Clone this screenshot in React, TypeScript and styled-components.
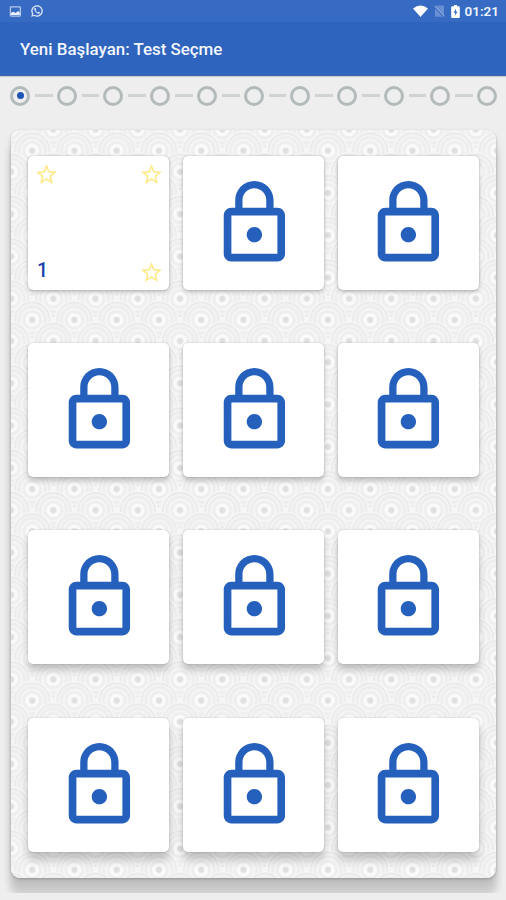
import React from "react";
import styled, { createGlobalStyle } from "styled-components";

const BLUE = "#2e63be";

const GlobalStyle = createGlobalStyle`
  * { box-sizing: border-box; }
  body { margin: 0; background: #eeeeee; font-family: Roboto, sans-serif; }
`;

const Screen = styled.div`
  width: 506px;
  height: 900px;
  display: flex;
  flex-direction: column;
  overflow: hidden;
  background: #eeeeee;
`;

const StatusBar = styled.div`
  flex: none;
  height: 22px;
  padding: 0 7px 0 9px;
  display: flex;
  align-items: center;
  background: #366ac3;
  color: #fff;
`;

const StatusGroup = styled.div<{ $end?: boolean }>`
  display: flex;
  align-items: center;
  gap: ${(p) => (p.$end ? "6px" : "8px")};
  margin-left: ${(p) => (p.$end ? "auto" : "0")};
  svg { display: block; }
`;

const Clock = styled.span`
  margin-left: -2px;
  font-size: 13.5px;
  line-height: 20px;
  font-weight: 600;
  color: #edf3fc;
`;

const AppBar = styled.header`
  flex: none;
  height: 54px;
  padding: 1px 20px 0;
  display: flex;
  align-items: center;
  background: ${BLUE};
  border-bottom: 1px solid #3a64b0;
  box-shadow: 0 1px 1px rgba(0, 0, 0, 0.14);
`;

const Title = styled.h1`
  margin: 0;
  color: #f4f7fd;
  font-size: 16.9px;
  line-height: 24px;
  font-weight: 500;
  white-space: nowrap;
`;

const Steps = styled.nav`
  flex: none;
  height: 39px;
  padding: 0 9px 0 10px;
  display: flex;
  align-items: center;
`;

const Step = styled.span`
  flex: none;
  width: 20px;
  height: 20px;
  display: grid;
  place-items: center;
  border: 3px solid #b2babb;
  border-radius: 50%;
`;

const StepDot = styled.span`
  width: 7px;
  height: 7px;
  border-radius: 50%;
  background: #1f55b8;
`;

const Connector = styled.span`
  flex: 1;
  height: 3px;
  margin: 0 4px 0 5px;
  background: #d0d3d3;
`;

const Stage = styled.main`
  flex: none;
  height: 778px;
  padding: 15px 10px 15px 11px;
  overflow: hidden;
`;

const Panel = styled.section`
  position: relative;
  height: 748px;
  border-radius: 9px;
  background: #f3f3f3;
  box-shadow: 0 18px 7px 1px rgba(0, 0, 0, 0.12), 0 8px 9px 1px rgba(0, 0, 0, 0.09),
    0 1px 3px rgba(0, 0, 0, 0.24);
`;

const Backdrop = styled.svg`
  position: absolute;
  inset: 0;
  width: 100%;
  height: 100%;
  border-radius: 9px;
`;

const Grid = styled.div`
  position: relative;
  display: grid;
  grid-template-columns: repeat(3, 141px);
  grid-auto-rows: 134px;
  gap: 53.1px 13.8px;
  padding: 26.3px 0 0 17.4px;
`;

const Card = styled.article<{ $depth: number }>`
  display: grid;
  place-items: center;
  border-radius: 5px;
  background: #fff;
  box-shadow: 0 ${(p) => 2 + p.$depth * 2}px ${(p) => 4 + p.$depth * 1.5}px rgba(0, 0, 0, 0.2),
    0 0 2px rgba(0, 0, 0, 0.22);
`;

const OpenFace = styled.div`
  width: 100%;
  height: 100%;
  padding: 6px 5px 5px 5.5px;
  display: grid;
  grid-template-columns: 1fr 1fr;
  align-content: space-between;
  svg { display: block; }
`;

const Corner = styled.div<{ $right?: boolean }>`
  display: flex;
  justify-content: ${(p) => (p.$right ? "flex-end" : "flex-start")};
`;

const Level = styled.span`
  padding: 1px 0 0 3px;
  color: #1a43ab;
  font-size: 19.5px;
  line-height: 19px;
  font-weight: 500;
`;

function Lock() {
  return (
    <svg width="92" height="92" viewBox="-0.1 -0.05 24 24" fill="#2560bd">
      <path d="M12 17c1.1 0 2-.9 2-2s-.9-2-2-2-2 .9-2 2 .9 2 2 2zm6-9h-1V6c0-2.76-2.24-5-5-5S7 3.24 7 6v2H6c-1.1 0-2 .9-2 2v10c0 1.1.9 2 2 2h12c1.1 0 2-.9 2-2V10c0-1.1-.9-2-2-2zM8.9 6c0-1.71 1.39-3.1 3.1-3.1s3.1 1.39 3.1 3.1v2H8.9V6zM18 20H6V10h12v10z" />
    </svg>
  );
}

function Star() {
  return (
    <svg width="25" height="25" viewBox="0 0 24 24" fill="#fdea8b">
      <path d="M22 9.24l-7.19-.62L12 2 9.19 8.63 2 9.24l5.46 4.73L5.82 21 12 17.27 18.18 21l-1.63-7.03L22 9.24zM12 15.4l-3.76 2.27 1-4.28-3.32-2.88 4.38-.38L12 6.1l1.71 4.04 4.38.38-3.32 2.88 1 4.28L12 15.4z" />
    </svg>
  );
}

function Scale({ x, y }: { x: number; y: number }) {
  return (
    <g transform={`translate(${x} ${y})`}>
      <circle r="19.8" fill="#f7f7f7" />
      <circle r="17.4" fill="#f3f3f3" stroke="#e9e9e9" strokeWidth="1.6" />
      <circle r="13" fill="#f6f6f6" stroke="#ededed" strokeWidth="2.6" />
      <circle r="9.8" fill="#eeeeee" />
      <circle r="7" fill="#fafafa" />
      <circle r="3.1" fill="#e0e0e0" />
    </g>
  );
}

function LacePattern() {
  const w = 42.25;
  const h = 42.3;
  const rows = [-1, -0.5, 0, 0.5, 1, 1.5];
  return (
    <Backdrop aria-hidden="true">
      <defs>
        <pattern id="lace" x="21.2" y="20.7" width={w} height={h} patternUnits="userSpaceOnUse">
          <rect width={w} height={h} fill="#f5f5f5" />
          {rows.map((r) =>
            (r % 1 === 0 ? [0, 1] : [-0.5, 0.5, 1.5]).map((c) => (
              <Scale key={`${r}:${c}`} x={c * w} y={r * h} />
            ))
          )}
        </pattern>
      </defs>
      <rect width="100%" height="100%" fill="url(#lace)" />
    </Backdrop>
  );
}

function StatusIcons() {
  return (
    <StatusBar>
      <StatusGroup>
        <svg width="13" height="11" viewBox="0 0 13 11">
          <rect x="1.4" y=".9" width="10" height="9.2" rx=".8" fill="none" stroke="#b4c8ec" strokeWidth="1.3" />
          <path d="M2 9V6.8L4.5 5.8l2 1.2L9.2 5l1.6 1.5V9z" fill="#e9f0fb" />
        </svg>
        <svg width="14" height="14" viewBox="0 0 24 24" fill="#dbe6f7">
          <path d="M12.04 2C6.58 2 2.13 6.45 2.13 11.91c0 1.75.46 3.45 1.32 4.95L2.05 22l5.25-1.38c1.45.79 3.08 1.21 4.74 1.21 5.46 0 9.91-4.45 9.91-9.91S17.5 2 12.04 2zm0 17.6c-1.5 0-2.9-.4-4.1-1.2l-3 .8.8-2.9a7.7 7.7 0 1 1 6.3 3.3z" />
          <path d="M8.3 6.5c-.9.6-1.3 1.5-1.1 2.6.5 3.5 3.9 7 7.3 7.7 1.4.2 2.7-.7 2.9-2.3l-2.6-1.3-1.3 1.3c-1.7-.7-3.1-2-3.9-3.7l1.1-1.3-1.1-2.7z" />
        </svg>
      </StatusGroup>
      <StatusGroup $end>
        <svg width="15" height="12" viewBox="0 0 15 12">
          <path d="M0 3.4Q7.5-2.4 15 3.4L7.5 12z" fill="#fff" />
        </svg>
        <svg width="11" height="12" viewBox="0 0 11 12">
          <path d="M3 .5h6q1 0 1 1v9.2q0 1-1 1H2q-1 0-1-1V3z" fill="#688fd2" />
          <path d="M.8 2 10 12" stroke="#366ac3" strokeWidth="1.6" />
          <path d="M.8.8 10.5 11.5" stroke="#8ba9dd" strokeWidth="1.1" />
        </svg>
        <svg width="9" height="13" viewBox="0 0 9 13">
          <path d="M3 0h3v1.3h1.8q1 0 1 1V12q0 1-1 1H1.2q-1 0-1-1V2.3q0-1 1-1H3z" fill="#fff" />
          <path d="M5 3.7 2.5 7.7h1.6v3L6.6 6.6H5z" fill="#3f70c6" />
        </svg>
        <Clock>01:21</Clock>
      </StatusGroup>
    </StatusBar>
  );
}

const steps = Array.from({ length: 11 }, (_, i) => i);
const levels = Array.from({ length: 12 }, (_, i) => i + 1);

export default function App() {
  return (
    <>
      <GlobalStyle />
      <Screen>
        <StatusIcons />
        <AppBar>
          <Title>Yeni Başlayan: Test Seçme</Title>
        </AppBar>
        <Steps>
          {steps.map((i) => (
            <React.Fragment key={i}>
              {i > 0 && <Connector />}
              <Step>{i === 0 && <StepDot />}</Step>
            </React.Fragment>
          ))}
        </Steps>
        <Stage>
          <Panel>
            <LacePattern />
            <Grid>
              {levels.map((n) => (
                <Card key={n} $depth={Math.floor((n - 1) / 3)}>
                  {n === 1 ? (
                    <OpenFace>
                      <Corner><Star /></Corner>
                      <Corner $right><Star /></Corner>
                      <Level>{n}</Level>
                      <Corner $right><Star /></Corner>
                    </OpenFace>
                  ) : (
                    <Lock />
                  )}
                </Card>
              ))}
            </Grid>
          </Panel>
        </Stage>
      </Screen>
    </>
  );
}
